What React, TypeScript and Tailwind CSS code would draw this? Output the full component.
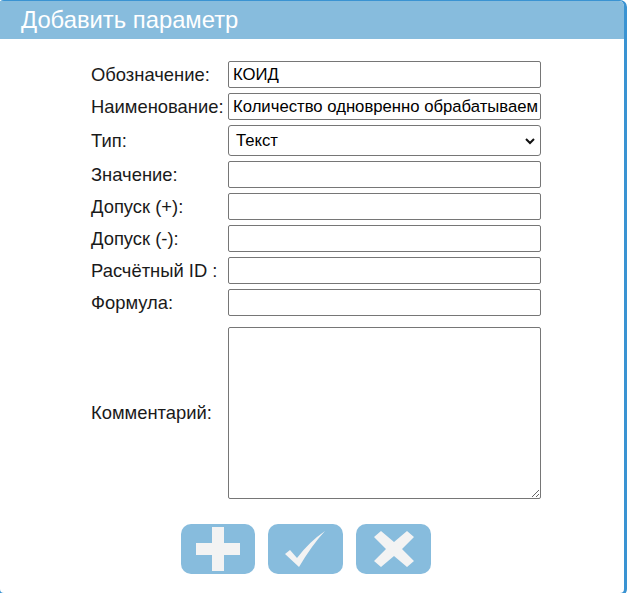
import React from "react";

const fieldCls =
  "h-[27px] w-full rounded-[2px] border border-[#767676] bg-white pl-[4px] pr-[2px] text-[16.7px] leading-[20px] text-black outline-none";

function Row({ label, children }: { label: string; children: React.ReactNode }) {
  return (
    <div className="grid grid-cols-[137px_313px] items-center">
      <span className="text-[18.4px] leading-[22px] text-[#1a1a1a]">{label}</span>
      {children}
    </div>
  );
}

function PlusIcon() {
  return (
    <svg width="44" height="44" viewBox="0 0 44 44">
      <path d="M16 0h12v16h16v12H28v16H16V28H0V16h16z" fill="#f3f3f3" />
    </svg>
  );
}

function CheckIcon() {
  return (
    <svg width="42" height="38" viewBox="0 0 42 38">
      <path d="M0 24 L5 20 L12 28 Q24 12 40 1 Q27 15 14 37 Z" fill="#f3f3f3" />
    </svg>
  );
}

function CrossIcon() {
  return (
    <svg width="40" height="36" viewBox="0 0 40 36">
      <path
        d="M0 6 L7 0 L20 11 L33 0 L40 6 L28 18 L40 30 L33 36 L20 25 L7 36 L0 30 L12 18 Z"
        fill="#f3f3f3"
      />
    </svg>
  );
}

export default function App() {
  return (
    <div
      className="relative h-[593px] w-[627px] overflow-hidden bg-white"
      style={{ fontFamily: '"Liberation Sans", Arial, sans-serif' }}
    >
      <div className="ml-[-3px] h-[596px] rounded-[7px] border-[3px] border-t-[1px] border-[#3a93d2] bg-white">
        <div className="flex h-[38px] items-center rounded-tr-[5px] bg-[#87bcdd] pl-[21px]">
          <span className="text-[23.8px] leading-[28px] text-white">Добавить параметр</span>
        </div>

        <div className="ml-[91px] mt-[22px] flex flex-col gap-[5px]">
          <Row label="Обозначение:">
            <input className={fieldCls} defaultValue="КОИД" />
          </Row>
          <Row label="Наименование:">
            <input
              className={fieldCls}
              defaultValue="Количество одновренно обрабатываемых запросов"
            />
          </Row>
          <Row label="Тип:">
            <div className="relative h-[31px] w-full rounded-[3px] border border-[#767676] bg-white">
              <span className="absolute left-[7px] top-[5px] text-[16.7px] leading-[20px] text-black">
                Текст
              </span>
              <svg
                className="absolute right-[4px] top-[9px]"
                width="12"
                height="12"
                viewBox="0 0 12 12"
              >
                <path d="M2 4l4 4 4-4" stroke="#111" strokeWidth="2" fill="none" />
              </svg>
            </div>
          </Row>
          <Row label="Значение:">
            <input className={fieldCls} />
          </Row>
          <Row label="Допуск (+):">
            <input className={fieldCls} />
          </Row>
          <Row label="Допуск (-):">
            <input className={fieldCls} />
          </Row>
          <Row label="Расчётный ID :">
            <input className={fieldCls} />
          </Row>
          <Row label="Формула:">
            <input className={fieldCls} />
          </Row>
          <div className="mt-[6px]">
            <Row label="Комментарий:">
              <textarea className="block h-[172px] w-full rounded-[2px] border border-[#767676] bg-white outline-none" />
            </Row>
          </div>
        </div>

        <div className="ml-[181px] mt-[25px] flex gap-[13px]">
          <button className="flex h-[50px] w-[74px] items-center justify-center rounded-[10px] bg-[#87bcdd]">
            <PlusIcon />
          </button>
          <button className="flex h-[50px] w-[75px] items-center justify-center rounded-[10px] bg-[#87bcdd]">
            <CheckIcon />
          </button>
          <button className="flex h-[50px] w-[75px] items-center justify-center rounded-[10px] bg-[#87bcdd]">
            <CrossIcon />
          </button>
        </div>
      </div>
    </div>
  );
}
